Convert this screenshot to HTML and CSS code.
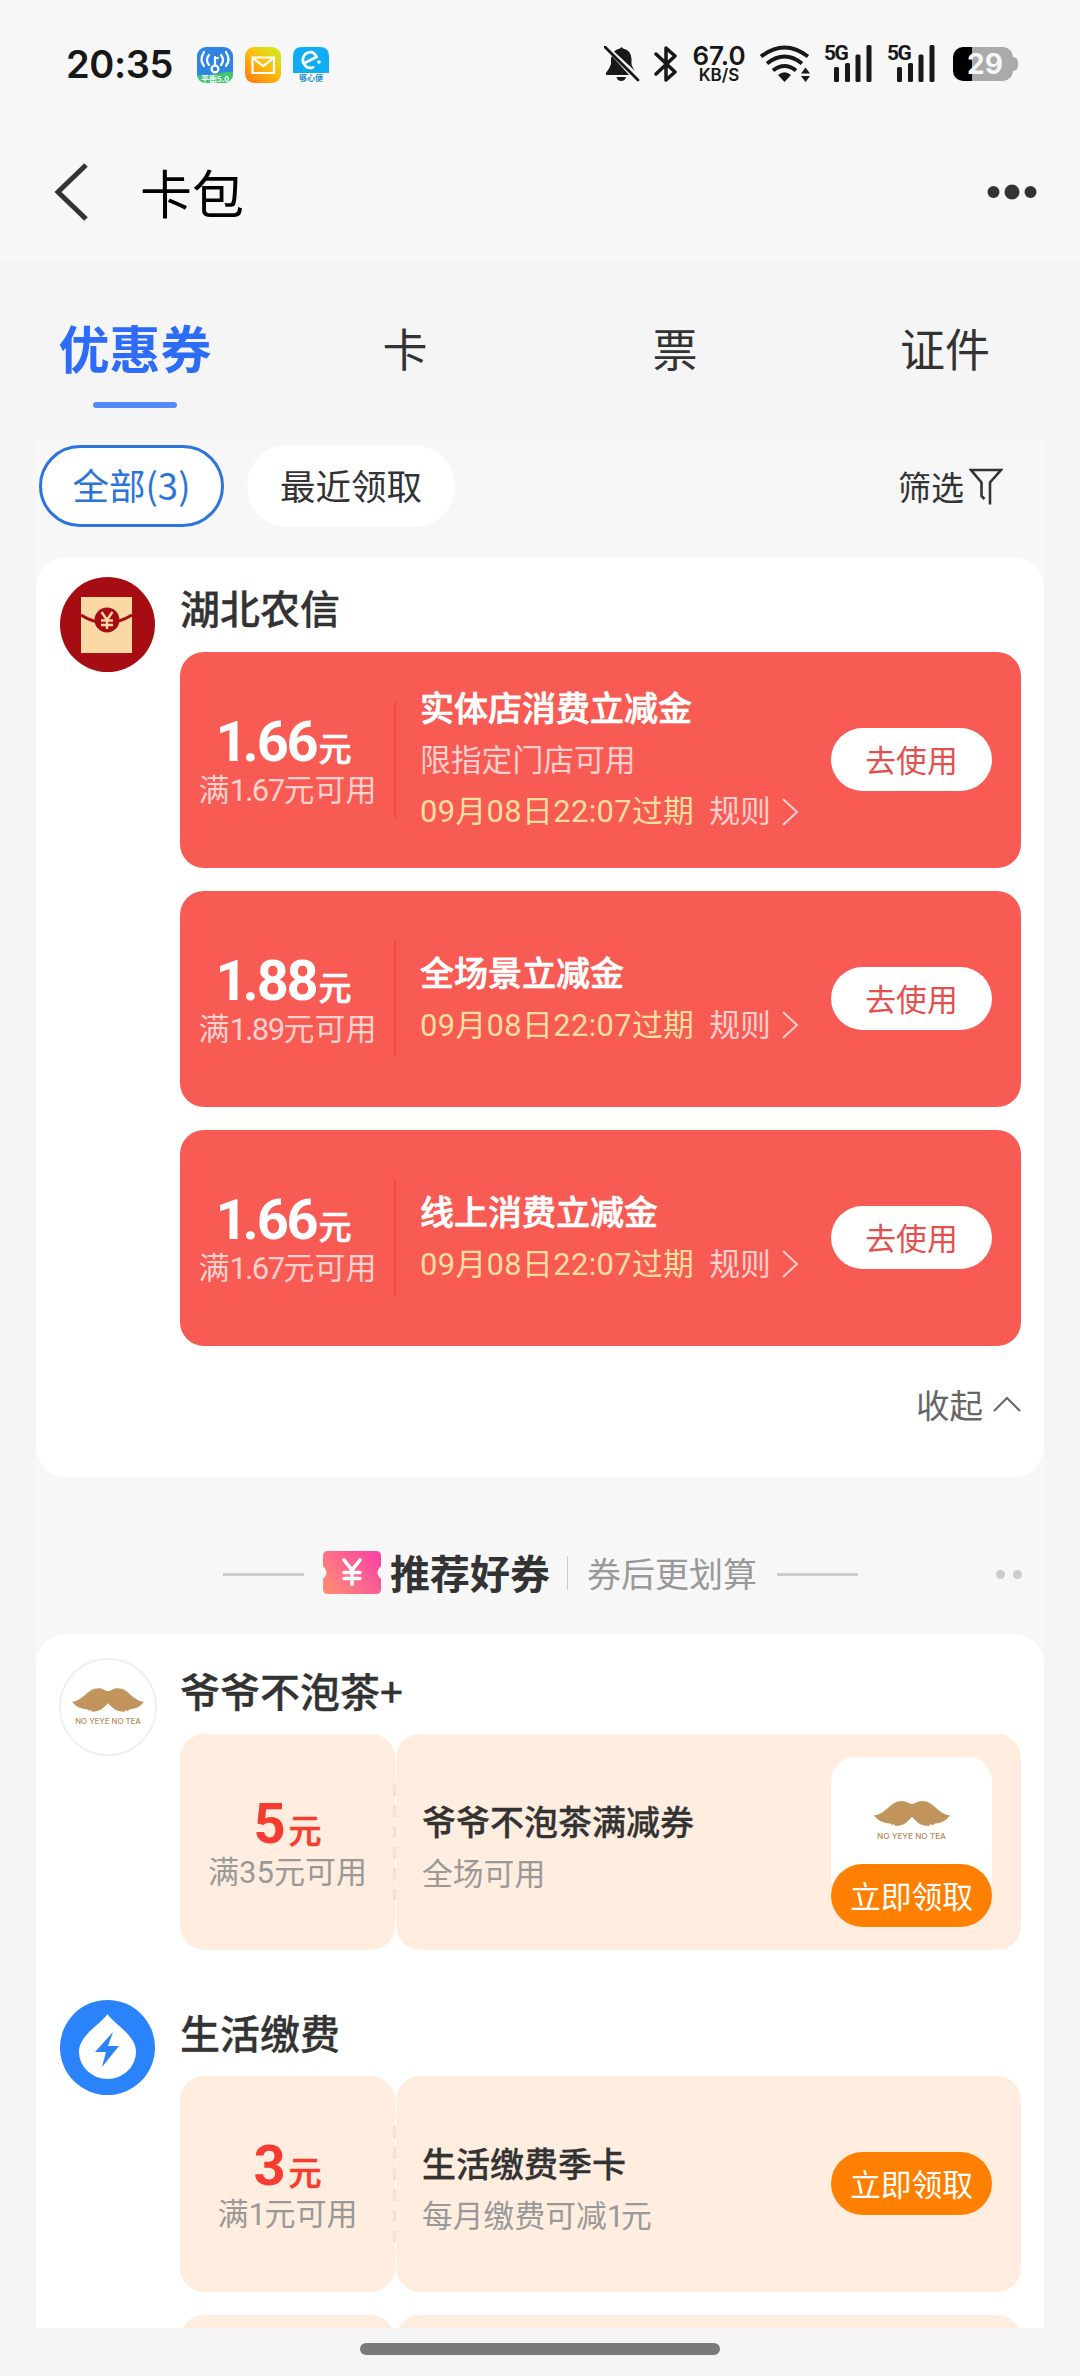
FILE: index.html
```html
<!DOCTYPE html>
<html lang="zh-CN">
<head>
<meta charset="utf-8">
<title>卡包</title>
<link rel="stylesheet" href="styles.css">
</head>
<body>
<svg class="defs" width="0" height="0" aria-hidden="true">
  <symbol id="moustache" viewBox="0 0 76 26">
    <path d="M0 15.500C14 13 16 1 28 1C33 1 35 4 38 4C41 4 43 1 48 1C60 1 62 13 76 15.500C71 22 66 23 61 23.500L58.500 25.500L57 24L55 26C46 26 43 22 38 17C33 22 30 26 21 26L20 24L18.500 25L16 23.500C11 23 5 22 0 15.500Z" fill="#c0945c"/>
  </symbol>
  <symbol id="arrow" viewBox="0 0 18 28">
    <path d="M2 1L16 14L2 27" fill="none" stroke="#ffd0cd" stroke-width="2"/>
  </symbol>
</svg>
<div class="screen">
  <div class="top">
    <div class="status">
      <span class="clock">20:35</span>
      <div class="apps">
        <svg width="36" height="36" viewBox="0 0 36 36">
          <defs><clipPath id="appclip"><rect width="36" height="36" rx="9"/></clipPath></defs>
          <g clip-path="url(#appclip)">
            <rect width="36" height="36" fill="#2f86e2"/>
            <path d="M0 28Q10 30 20 27T36 25V36H0Z" fill="#3fc66c"/>
            <g fill="none" stroke="#fff" stroke-width="2.2" stroke-linecap="round">
              <circle cx="18" cy="22" r="3.4"/><path d="M18 18V10M18 11H21"/>
              <path d="M12 8Q8 13 12 18M7 5Q2 13 7 19M24 8Q28 13 24 18M29 5Q34 13 29 19"/>
            </g>
            <text x="18" y="34.5" class="app-label" fill="#fff">平衡5.0</text>
          </g>
        </svg>
        <svg width="36" height="36" viewBox="0 0 36 36">
          <defs><linearGradient id="mail" x1="0.1" y1="1" x2="0.9" y2="0"><stop offset="0" stop-color="#ff7a14"/><stop offset=".5" stop-color="#ffb90c"/><stop offset="1" stop-color="#cfee1a"/></linearGradient></defs>
          <rect width="36" height="36" rx="9" fill="url(#mail)"/>
          <path d="M7.500 10.500H29V26H7.500ZM8 11L18.200 19L28.500 11" fill="none" stroke="#fff" stroke-width="2.200"/>
        </svg>
        <svg width="36" height="36" viewBox="0 0 36 36">
          <rect width="36" height="36" rx="9" fill="#fff"/>
          <path d="M0 26V9Q0 0 9 0H27Q36 0 36 9V26Z" fill="#0fadf3"/>
          <path d="M12.500 15.500L23.500 10Q21 4 15 5.500Q9 8 10 15Q13 22.500 20 20.500" fill="none" stroke="#fff" stroke-width="2.800" stroke-linecap="round"/>
          <circle cx="26" cy="15" r="1.800" fill="#fff"/>
          <text x="18" y="34" class="app-label" fill="#1e8fd0">够心便</text>
        </svg>
      </div>
      <div class="indicators">
        <svg class="bell" width="36" height="36" viewBox="0 0 36 36" fill="#181818">
          <path d="M10 5.500Q13 3 16 2.500Q17.500 0 19 2.500Q27 4 27.500 13V18Q28.500 22 31 25ZM7 12V18Q6 22 2 27V29H25L8 10ZM12.500 31H22Q21 35 17.200 35T12.500 31Z"/>
          <path d="M1 1L34 34" stroke="#181818" stroke-width="2.800" stroke-linecap="round"/>
        </svg>
        <svg class="bt" width="24" height="38" viewBox="0 0 24 38">
          <path d="M2 9L21 27L12 35V3L21 11L2 29" fill="none" stroke="#181818" stroke-width="3.500" stroke-linejoin="round" stroke-linecap="round"/>
        </svg>
        <div class="speed"><b>67.0</b><i>KB/S</i></div>
        <svg class="wifi" width="50" height="38" viewBox="0 0 50 38">
          <g fill="none" stroke="#181818" stroke-width="3.800"><path d="M1 11.500Q24.500 -6.500 48 11.500"/><path d="M7 18.500Q24.500 4.500 42 18.500"/><path d="M13 25.500Q24.500 16.500 36 25.500"/></g>
          <path d="M18 30Q24.500 24.500 31 30L24.500 37Z M45.500 22.500L50 28.500H41ZM45.500 37L50 31H41Z" fill="#181818"/>
        </svg>
        <div class="signal"><span>5G</span><svg width="38" height="38" viewBox="0 0 38 38" fill="#181818"><rect y="22" width="5" height="15" rx="1.500"/><rect x="11" y="18" width="5" height="19" rx="1.500"/><rect x="21.500" y="9.500" width="5" height="27.500" rx="1.500"/><rect x="32.500" width="5" height="37" rx="1.500"/></svg></div>
        <div class="signal"><span>5G</span><svg width="38" height="38" viewBox="0 0 38 38" fill="#181818"><rect y="22" width="5" height="15" rx="1.500"/><rect x="11" y="18" width="5" height="19" rx="1.500"/><rect x="21.500" y="9.500" width="5" height="27.500" rx="1.500"/><rect x="32.500" width="5" height="37" rx="1.500"/></svg></div>
        <div class="battery"><span>29</span></div>
      </div>
    </div>
    <div class="nav">
      <svg class="back" width="36" height="58" viewBox="0 0 36 58"><path d="M33 2L5 29L33 56" fill="none" stroke="#333" stroke-width="5"/></svg>
      <h1>卡包</h1>
      <svg class="more" width="50" height="16" viewBox="0 0 50 16" fill="#333"><circle cx="6.500" cy="8" r="6"/><circle cx="25" cy="8" r="7.500"/><circle cx="43.500" cy="8" r="6"/></svg>
    </div>
  </div>

  <div class="tabs">
    <div class="tab active">优惠券</div>
    <div class="tab">卡</div>
    <div class="tab">票</div>
    <div class="tab">证件</div>
  </div>

  <div class="content">
    <div class="filters">
      <span class="chip selected">全部(3)</span>
      <span class="chip">最近领取</span>
      <span class="filter">筛选<svg width="34" height="38" viewBox="0 0 34 38"><path d="M15.500 32L12.500 29V15.500L2 3H32L21 15.500V37.500" fill="none" stroke="#333" stroke-width="2.600"/></svg></span>
    </div>

    <section class="card mine">
      <div class="shop">
        <svg class="avatar" width="95" height="95" viewBox="0 0 95 95">
          <circle cx="47.500" cy="47.500" r="47.500" fill="#a60d13"/>
          <path d="M21 20H72V76H21Z" fill="#fcd8a4"/>
          <path d="M21 38Q46 54 72 38" fill="none" stroke="#a60d13" stroke-width="3"/>
          <circle cx="47" cy="43" r="12.500" fill="#a60d13"/>
          <path d="M41.500 35L47 43L52.500 35M47 43V52M41 43.500H53M41 48H53" fill="none" stroke="#fcd8a4" stroke-width="2.400"/>
        </svg>
        <div class="body">
          <h2>湖北农信</h2>
          <div class="coupons">
            <article class="coupon red">
              <div class="amount"><div class="price"><b><i>1</i>.66</b>元</div><div class="limit">满<i>1.67</i>元可用</div></div>
              <div class="info"><h3>实体店消费立减金</h3><p>限指定门店可用</p><p class="expire">09月08日22:07过期<span>规则<svg width="18" height="28"><use href="#arrow"/></svg></span></p></div>
              <span class="btn">去使用</span>
            </article>
            <article class="coupon red">
              <div class="amount"><div class="price"><b><i>1</i>.88</b>元</div><div class="limit">满<i>1.89</i>元可用</div></div>
              <div class="info"><h3>全场景立减金</h3><p class="expire">09月08日22:07过期<span>规则<svg width="18" height="28"><use href="#arrow"/></svg></span></p></div>
              <span class="btn">去使用</span>
            </article>
            <article class="coupon red">
              <div class="amount"><div class="price"><b><i>1</i>.66</b>元</div><div class="limit">满<i>1.67</i>元可用</div></div>
              <div class="info"><h3>线上消费立减金</h3><p class="expire">09月08日22:07过期<span>规则<svg width="18" height="28"><use href="#arrow"/></svg></span></p></div>
              <span class="btn">去使用</span>
            </article>
          </div>
          <div class="collapse">收起<svg width="28" height="16" viewBox="0 0 28 16"><path d="M1 15L14 2L27 15" fill="none" stroke="#666" stroke-width="2"/></svg></div>
        </div>
      </div>
    </section>

    <div class="recommend">
      <span class="rule"></span>
      <svg class="ticket" width="58" height="43" viewBox="0 0 58 43">
        <defs><linearGradient id="tk" x1="0" y1=".8" x2="1" y2=".2"><stop offset="0" stop-color="#ff8a76"/><stop offset="1" stop-color="#fb45a3"/></linearGradient></defs>
        <path d="M5 0H53Q58 0 58 5V15Q51 21.500 58 28V38Q58 43 53 43H5Q0 43 0 38V28Q7 21.500 0 15V5Q0 0 5 0Z" fill="url(#tk)"/>
        <path d="M21 9L29 19L37 9M29 19V33.500M21 21.500H37M21 27.500H37" fill="none" stroke="#fff" stroke-width="3.600" stroke-linecap="round"/>
      </svg>
      <h2>推荐好券</h2>
      <span class="sep"></span>
      <span class="sub">券后更划算</span>
      <span class="rule"></span>
      <span class="dots"><i></i><i></i></span>
    </div>

    <section class="card offers">
      <div class="shop">
        <div class="avatar ring"><svg width="72" height="25"><use href="#moustache"/></svg><span>NO YEYE NO TEA</span></div>
        <div class="body">
          <h2>爷爷不泡茶+</h2>
          <div class="coupons">
            <article class="coupon cream">
              <div class="amount"><div class="price"><b>5</b>元</div><div class="limit">满35元可用</div></div>
              <div class="info"><h3>爷爷不泡茶满减券</h3><p>全场可用</p></div>
              <div class="product"><div class="thumb"><svg width="76" height="26"><use href="#moustache"/></svg><span>NO YEYE NO TEA</span></div><span class="btn">立即领取</span></div>
            </article>
          </div>
        </div>
      </div>
      <div class="shop">
        <svg class="avatar" width="95" height="95" viewBox="0 0 95 95">
          <circle cx="47.500" cy="47.500" r="47.500" fill="#2a83fb"/>
          <path d="M47.500 14C55 25 76 35 76 52A28.500 27 0 0 1 19 52C19 35 40 25 47.500 14Z" fill="#fff"/>
          <path d="M53 32L35 52H46L42 67L59 46H48Z" fill="#2a83fb"/>
        </svg>
        <div class="body">
          <h2>生活缴费</h2>
          <div class="coupons">
            <article class="coupon cream">
              <div class="amount"><div class="price"><b>3</b>元</div><div class="limit">满<i>1</i>元可用</div></div>
              <div class="info"><h3>生活缴费季卡</h3><p>每月缴费可减<i>1</i>元</p></div>
              <span class="btn">立即领取</span>
            </article>
            <article class="coupon cream"><div class="amount"></div><div class="info"></div></article>
          </div>
        </div>
      </div>
    </section>
  </div>
  <div class="home"></div>
</div>
</body>
</html>
```
FILE: styles.css
```css
* { box-sizing: border-box; margin: 0; padding: 0; }
i { font-style: normal; }
svg { display: block; flex: none; }
body { background: #f5f5f5; font-family: "Noto Sans CJK SC", sans-serif; color: #333; }
.defs { position: absolute; }
.screen { width: 1080px; height: 2376px; overflow: hidden; display: flex; flex-direction: column; }

.top { height: 263px; background: #f7f7f7; flex: none; }
.status { height: 130px; padding: 0 61px 0 66px; display: flex; align-items: center; font-family: Inter, sans-serif; color: #181818; }
.clock { width: 131px; font-size: 38px; line-height: 40px; font-weight: 600; letter-spacing: -0.4px; margin-top: -3px; white-space: nowrap; }
.apps { display: flex; gap: 12px; }
.app-label { font: 700 8px "Noto Sans CJK SC", sans-serif; text-anchor: middle; }
.indicators { margin-left: auto; display: flex; align-items: center; height: 38px; margin-top: -3px; }
.bt { margin-left: 14px; }
.speed { width: 58px; margin-left: 12px; display: flex; flex-direction: column; align-items: center; }
.speed b { font-size: 26px; line-height: 23px; font-weight: 600; margin-top: -1px; }
.speed i { font-size: 17px; line-height: 16px; font-weight: 600; }
.wifi { margin-left: 12px; }
.signal { width: 48px; height: 38px; margin-left: 14px; display: flex; position: relative; justify-content: flex-end; }
.signal + .signal { margin-left: 15px; }
.signal span { position: absolute; left: 0; top: -2px; font: 700 21px/20px Roboto, sans-serif; letter-spacing: -1.5px; }
.battery { width: 60px; height: 34px; margin: 0 6px 0 18px; border-radius: 10px; background: linear-gradient(90deg, #000 19px, #aaa 19px); position: relative; text-align: center; }
.battery::after { content: ""; position: absolute; left: 59px; top: 10px; width: 6px; height: 14px; border-radius: 0 5px 5px 0; background: #aaa; }
.battery span { display: block; font-size: 28px; line-height: 35px; font-weight: 700; color: #f7f7f7; padding-left: 4px; }

.nav { height: 124px; padding: 0 43px 0 53px; display: flex; align-items: center; }
.nav h1 { font-size: 52px; line-height: 70px; font-weight: 400; color: #000; margin-left: 51px; }
.more { margin-left: auto; }

.tabs { display: grid; grid-template-columns: repeat(4, 270px); height: 174px; flex: none; }
.tab { height: 145px; text-align: center; font-size: 45px; line-height: 169px; position: relative; }
.tab.active { font-size: 51px; font-weight: 700; color: #2c6cf8; line-height: 169px; }
.tab.active::after { content: ""; position: absolute; left: 93px; bottom: 0; width: 84px; height: 6px; border-radius: 3px; background: #5589f5; }

.content { margin: 0 35px; padding: 0 1px; background: #f7f7f7; height: 1891px; flex: none; overflow: hidden; }
.filters { height: 120px; padding: 8px 41px 0 3px; display: flex; gap: 23px; }
.chip { height: 82px; padding: 0 33px; border-radius: 41px; background: #fff; font-size: 35.500px; line-height: 79px; white-space: nowrap; }
.chip.selected { border: 3px solid #2b74de; color: #2b74d8; font-size: 36.5px; line-height: 73px; padding: 0 20px; width: 185px; text-align: center; }
.filter { margin-left: auto; height: 82px; display: flex; align-items: center; font-size: 33px; gap: 5px; }

.card { background: #fff; width: 1008px; border-radius: 30px; }
.mine { height: 920px; padding: 20px 23px 0 24px; }
.shop { display: flex; }
.avatar { width: 95px; height: 95px; flex: none; margin-right: 25px; }
.body { width: 841px; }
.body h2 { font-size: 40px; line-height: 61px; height: 75px; font-weight: 500; white-space: nowrap; -webkit-text-stroke: 0.3px; }
.coupons { display: flex; flex-direction: column; gap: 23px; }
.coupon { height: 216px; border-radius: 24px; display: flex; align-items: center; padding-right: 29px; }
.amount { width: 215px; height: 216px; display: flex; flex-direction: column; align-items: center; padding-top: 60px; flex: none; position: relative; font-family: Roboto, "Noto Sans CJK SC", sans-serif; }
.price { font-size: 33px; line-height: 60px; height: 60px; font-weight: 500; -webkit-text-stroke: 0.6px; white-space: nowrap; display: flex; align-items: baseline; margin-left: -8px; }
.price b { font-size: 56px; font-weight: 700; letter-spacing: -2.200px; margin-right: 2px; -webkit-text-stroke: 0; }
.price i { letter-spacing: -5px; }
.limit { font-size: 31px; line-height: 32px; white-space: nowrap; margin-top: 3px; }
.limit i { letter-spacing: -1.600px; }
.amount::after { content: ""; position: absolute; right: -1px; top: 50px; width: 2px; height: 116px; }
.info { flex: 1; padding: 0 0 4px 25px; }
.info h3 { font-size: 34px; line-height: 52px; font-weight: 500; white-space: nowrap; -webkit-text-stroke: 0.3px; }
.red .info h3 { -webkit-text-stroke: 0.7px; }
.info p { font-family: Roboto, "Noto Sans CJK SC", sans-serif; font-size: 30.800px; line-height: 47px; padding-top: 4px; white-space: nowrap; }
.info p i { letter-spacing: -3px; }
.info p.expire { display: flex; align-items: center; letter-spacing: 0.4px; }
.expire span { display: flex; align-items: center; gap: 10px; margin-left: 15px; color: #ffd0cd; letter-spacing: 0; }
.btn { width: 161px; height: 63px; border-radius: 32px; font-size: 30.800px; line-height: 61px; text-align: center; flex: none; white-space: nowrap; margin-bottom: 1px; }
.red { background: #f75b53; color: #fff; }
.red .limit, .red .info p { color: #ffd0cd; }
.red .info p.expire { color: #ffdf9e; }
.red .amount::after { background: #ee4b46; }
.red .btn { background: #fff; color: #e4504c; }
.collapse { display: flex; justify-content: flex-end; align-items: center; gap: 10px; margin-top: 33px; font-size: 33.500px; line-height: 50px; color: #666; }

.recommend { height: 157px; padding: 0 22px 0 187px; display: flex; align-items: center; margin-top: 0; }
.rule { width: 81px; height: 3px; background: #ccc; margin-top: 37px; }
.ticket { margin: 34px 0 0 19px; }
.recommend h2 { font-size: 40px; line-height: 50px; font-weight: 700; margin: 32px 0 0 9px; white-space: nowrap; }
.sep { width: 1px; height: 34px; background: #ccc; margin: 34px 19px 0 17px; }
.sub { font-size: 34px; line-height: 50px; color: #999; margin: 35px 20px 0 0; white-space: nowrap; }
.dots { margin: 37px 0 0 auto; display: flex; gap: 8px; }
.dots i { width: 9px; height: 9px; border-radius: 50%; background: #ccc; }

.offers { height: 800px; padding: 24px 23px 0 24px; }
.offers h2 { height: 76px; line-height: 64px; }
.offers .shop { height: 342px; }
.ring { width: 98px; height: 98px; margin: 0 23px 0 -1px; border: 2px solid #f0f0f0; border-radius: 50%; display: flex; flex-direction: column; align-items: center; padding-top: 27px; }
.ring span, .thumb span { font: 500 7.800px/10px Inter, sans-serif; color: #b58a5c; margin-top: 4px; white-space: nowrap; }
.thumb span { font-size: 8.200px; margin-top: 5px; }
.cream { background: linear-gradient(#ffeedf, #ffeedf) no-repeat right / 300px 100%; color: #333; padding: 0 29px 0 0; }
.cream .amount { background: #ffeedf; border-radius: 24px; }
.cream .price { color: #f63b30; margin-left: 0; }
.cream .price b { margin-right: 5px; }
.cream .limit, .cream .info p { color: #999; }
.cream .amount::after { z-index: 1; width: 3px; background: repeating-linear-gradient(#fbdcd2 0 12px, transparent 12px 21px); }
.cream .info { height: 216px; background: #ffeedf; border-radius: 24px 0 0 24px; margin-left: 1px; padding: 61px 0 0 26px; }
.cream .btn { background: #ff8000; color: #fff; }
.product { width: 161px; height: 170px; flex: none; }
.thumb { height: 146px; margin-bottom: -39px; background: #fff; border-radius: 24px; display: flex; flex-direction: column; align-items: center; padding-top: 43px; }
.product .btn { display: block; position: relative; }

.home { width: 360px; height: 12px; border-radius: 6px; background: #7a7a7a; margin: 15px auto 0; flex: none; }
```
